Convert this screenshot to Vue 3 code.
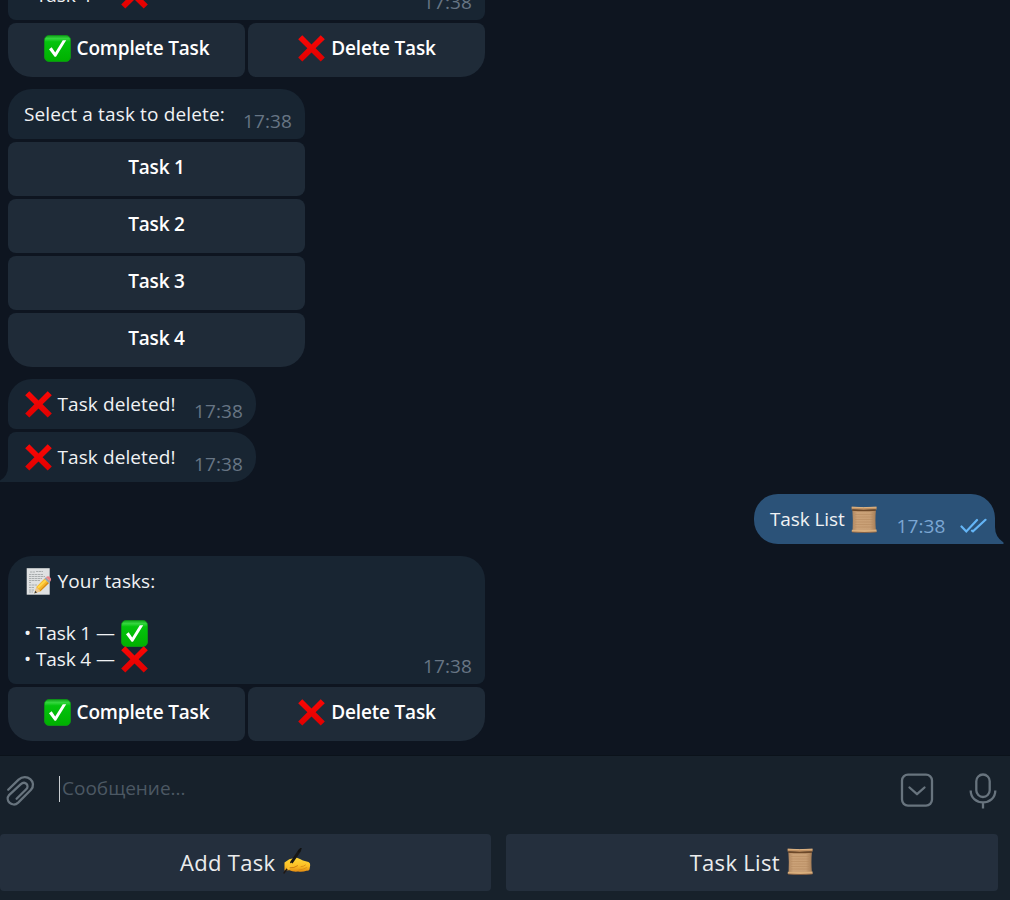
<script setup>
const deleteOptions = ['Task 1', 'Task 2', 'Task 3', 'Task 4']
const lists = {
  first: [{ name: 'Task 1', icon: 'check' }, { name: 'Task 4', icon: 'cross' }],
  last: [{ name: 'Task 1', icon: 'check' }, { name: 'Task 4', icon: 'cross' }],
}
const actions = [
  { label: 'Complete Task', icon: 'check' },
  { label: 'Delete Task', icon: 'cross' },
]
const time = '17:38'
</script>

<template>
  <div class="app">
    <svg class="defs" width="0" height="0" aria-hidden="true">
      <defs>
        <linearGradient id="gGreen" x1="0" y1="0" x2="0" y2="1">
          <stop offset="0" stop-color="#11a51b" />
          <stop offset=".12" stop-color="#35d63f" />
          <stop offset=".24" stop-color="#04c30d" />
          <stop offset="1" stop-color="#00b000" />
        </linearGradient>
        <linearGradient id="gRed" x1="0" y1="0" x2="0" y2="1">
          <stop offset="0" stop-color="#fb0705" />
          <stop offset="1" stop-color="#e00000" />
        </linearGradient>
        <linearGradient id="gPaper" x1="0" y1="0" x2="1" y2="0">
          <stop offset="0" stop-color="#b08760" />
          <stop offset=".2" stop-color="#cba278" />
          <stop offset=".75" stop-color="#c89f75" />
          <stop offset="1" stop-color="#a67d56" />
        </linearGradient>
        <linearGradient id="gHand" x1="0" y1="0" x2="0" y2="1">
          <stop offset="0" stop-color="#ffd83b" />
          <stop offset=".6" stop-color="#fdbf24" />
          <stop offset="1" stop-color="#e38b12" />
        </linearGradient>
        <symbol id="check" viewBox="0 0 27 27">
          <rect x=".5" y=".5" width="26" height="26" rx="4.5" fill="url(#gGreen)" stroke="#0c9c14" stroke-width=".8" />
          <path d="M5 14.2 7.7 12.2 11.2 17.5 18.8 5.3H22.2L12 21.8H10.6Z" fill="#fff" />
        </symbol>
        <symbol id="cross" viewBox="0 0 27 27">
          <path d="M4.3.2 13.5 9.4 22.7.2 26.8 4.2 17.6 13.3 26.8 22.6 22.7 26.6 13.5 17.5 4.3 26.6.2 22.6 9.4 13.3.2 4.2Z" fill="url(#gRed)" />
        </symbol>
        <symbol id="scroll" viewBox="0 0 27 27">
          <path d="M1.4 4.5H24.9Q24 13 24.9 24.5H1.6Q2.2 14 1.4 4.5Z" fill="url(#gPaper)" />
          <path d="M4 8.5H22M4 11H22M4 13.5H22M4 16H22M4 18.5H22M4 21H22" stroke="#b2875d" stroke-width=".5" />
          <path d="M.6.8Q12 1.6 25.6.8V3.6Q12 4.4.6 3.6Z" fill="#c09162" />
          <path d="M.8 1.2Q12 2 25.4 1.2" stroke="#e4bd8c" stroke-width=".8" fill="none" />
          <path d="M1.2 4Q12 5 24.8 4" stroke="#6d4828" stroke-width="1.4" fill="none" />
          <path d="M.8 23.8Q13 24.5 25.6 23.6V26Q13 27 .8 26Z" fill="#d9ae7c" />
          <path d="M1 26Q13 27 25.5 26" stroke="#80573a" stroke-width=".8" fill="none" />
        </symbol>
        <symbol id="memo" viewBox="0 0 27 27">
          <rect x="1.7" y=".2" width="23" height="26.5" fill="#dfe1e2" />
          <path d="M5 4H10M11 3.5H18M4 6.5H18M4 8.5H20M4 10.5H17M4 12.5H15M4 14.5H6M4 17H12M4 19.5H9M4 22H9M4 24H8" stroke="#9b9fa1" stroke-width=".8" stroke-dasharray="2.5 .5" />
          <path d="M9.5 25.3 11.5 18.8 19.4 10.7 23.8 15 15.4 23.2Z" fill="#f7b72c" />
          <path d="M12.3 19 20.2 11.4 21.6 12.7 13.5 20.5Z" fill="#ffd84a" />
          <path d="M14.5 22.7 22.7 14.3 23.8 15.3 15.4 23.2Z" fill="#d48a13" />
          <path d="M9.5 25.3 11.4 19 15.4 23.2Z" fill="#ecc78f" />
          <path d="M9.4 25.5 10.2 22.8 12 24.6Z" fill="#383838" />
          <path d="M19.4 10.7 20.9 9.2 25.3 13.5 23.8 15Z" fill="#9ba2a8" />
          <path d="M20.9 9.2Q23 7.5 25 9.2T25.3 13.5Z" fill="#e8848b" />
        </symbol>
        <symbol id="writing" viewBox="0 0 28 27">
          <path d="M1.5 22.5V14.5L6.3 11.2 13.3 9.4 17 11 20 12.5 25.5 14Q27.4 14.8 27.2 17L26.5 21.5Q25.8 23 23.5 22.7 20 24.3 15 23.6 10 24.2 6.5 22.3Z" fill="url(#gHand)" />
          <path d="M16 22Q20 21.8 23.5 19.7M18 18.7Q20.5 18.7 22.5 17" stroke="#d98a14" stroke-width=".8" fill="none" stroke-linecap="round" />
          <path d="M.6 25.5 4.6 20.2" stroke="#201915" stroke-width="1.4" />
          <path d="M8.4 14.6 16.8 2.4" stroke="#171717" stroke-width="2.8" stroke-linecap="round" />
          <path d="M15.8 3.2 17.8.6" stroke="#111" stroke-width="1.8" stroke-linecap="round" />
          <path d="M3.5 20.5 8 14.5 11 16.5Q9 19.5 5.5 21.5Z" fill="#fcc32b" />
          <path d="M7 19.8Q11 20.3 14.5 17.8" stroke="#c9780f" stroke-width=".9" fill="none" stroke-linecap="round" />
        </symbol>
      </defs>
    </svg>

    <main class="chat">
      <section v-for="(items, key) in { first: lists.first }" :key="key" class="message wide">
        <div class="bubble tall joined">
          <div class="text">
            <p><svg class="emoji"><use href="#memo" /></svg> Your tasks:</p>
            <p class="blank"></p>
            <p v-for="t in items" :key="t.name" class="item">• {{ t.name }} — <svg class="emoji"><use :href="'#' + t.icon" /></svg></p>
          </div>
          <time>{{ time }}</time>
        </div>
        <div class="keys row">
          <button v-for="a in actions" :key="a.label"><svg class="emoji"><use :href="'#' + a.icon" /></svg><span>{{ a.label }}</span></button>
        </div>
      </section>

      <section class="message select">
        <div class="bubble joined">
          <div class="text"><p class="prompt">Select a task to delete:</p></div>
          <time>{{ time }}</time>
        </div>
        <div class="keys column">
          <button v-for="o in deleteOptions" :key="o"><span>{{ o }}</span></button>
        </div>
      </section>

      <section class="group">
        <div v-for="n in 2" :key="n" class="bubble short" :class="n === 1 ? 'upper' : 'lower'">
          <div class="text"><p><svg class="emoji"><use href="#cross" /></svg> Task deleted!</p></div>
          <time>{{ time }}</time>
          <svg v-if="n === 2" class="tail-in" viewBox="0 0 9 22"><path d="M9 0V22H0V20.5Q8 16 8 6V0Z" /></svg>
        </div>
      </section>

      <section class="bubble out">
        <div class="text"><p class="item">Task List <svg class="emoji"><use href="#scroll" /></svg></p></div>
        <time>{{ time }}</time>
        <svg class="ticks" viewBox="0 0 28 16"><path d="M1.5 8.5 6.3 13.4 17 2M12 12.6 13 13.4 25.5 1.8" /></svg>
        <svg class="tail-out" viewBox="0 0 10 22"><path d="M0 0H1V5Q1 15 9.5 20.5V22H0Z" /></svg>
      </section>

      <section v-for="(items, key) in { last: lists.last }" :key="key" class="message wide">
        <div class="bubble tall joined">
          <div class="text">
            <p><svg class="emoji"><use href="#memo" /></svg> Your tasks:</p>
            <p class="blank"></p>
            <p v-for="t in items" :key="t.name" class="item">• {{ t.name }} — <svg class="emoji"><use :href="'#' + t.icon" /></svg></p>
          </div>
          <time>{{ time }}</time>
        </div>
        <div class="keys row">
          <button v-for="a in actions" :key="a.label"><svg class="emoji"><use :href="'#' + a.icon" /></svg><span>{{ a.label }}</span></button>
        </div>
      </section>
    </main>

    <footer class="panel">
      <div class="composer">
        <svg class="clip" viewBox="0 0 32 36">
          <path d="M3.2 14.8 13.6 4.6C21.5-2.5 32.8 7 25.8 15L13.2 27.6C7.5 33-.8 25.6 4.3 19.8L15.6 9.4C20.2 5.2 24.8 10.6 21.2 14.3L11.6 23.8" />
        </svg>
        <div class="field">Сообщение...</div>
        <svg class="box-icon" viewBox="0 0 34 34"><rect x="2" y="1.6" width="30" height="31" rx="6" /><path d="M9.5 14.5 17 21.2 24.5 14.5" /></svg>
        <svg class="mic" viewBox="0 0 28 36"><rect x="7.3" y="1.5" width="13.4" height="22.5" rx="6.7" /><path d="M1.7 17.5C1.7 33.3 26.3 33.3 26.3 17.5M14 29.5V35.5" /></svg>
      </div>
      <div class="reply">
        <button><span>Add Task</span><svg class="emoji hand"><use href="#writing" /></svg></button>
        <button><span>Task List</span><svg class="emoji"><use href="#scroll" /></svg></button>
      </div>
    </footer>
  </div>
</template>

<style>
body { background: #0e1621; }
</style>

<style scoped>
.app {
  width: 1010px;
  height: 900px;
  display: flex;
  flex-direction: column;
  overflow: hidden;
  background: #0e1520;
  color: #f0f2f4;
  font: 19px/26px "Open Sans", "Noto Sans", sans-serif;
}
.defs { position: absolute; }
.chat {
  height: 755px;
  box-sizing: border-box;
  padding: 0 15px 14px 8px;
  display: flex;
  flex-direction: column;
  justify-content: flex-end;
  align-items: flex-start;
  gap: 12px;
  overflow: hidden;
}
.message, .group { display: flex; flex-direction: column; gap: 3px; flex: none; }
.wide { width: 477px; }
.select { width: 297px; }
p { margin: 0; height: 26px; white-space: pre; letter-spacing: .09px; }
.prompt { letter-spacing: .14px; }
.item { letter-spacing: -.1px; }
.bubble {
  position: relative;
  flex: none;
  display: flex;
  justify-content: space-between;
  align-items: flex-end;
  box-sizing: border-box;
  height: 50px;
  padding: 0 13px 0 16px;
  background: #182532;
  border-radius: 24px;
}
.tall { height: 128px; }
.text { align-self: flex-start; padding-top: 12px; }
.joined { border-radius: 24px 24px 8px 8px; }
.upper { border-radius: 24px 24px 24px 8px; }
.lower { border-radius: 8px 24px 24px 0; }
.short { width: 248px; }
time { color: #677584; padding-bottom: 5.5px; letter-spacing: .12px; }
.emoji { width: 27px; height: 27px; flex: none; vertical-align: 3px; margin: -10px 1px -10px .5px; }
.item .emoji { margin-left: 1.5px; margin-right: 0; }
button {
  border: 0;
  margin: 0;
  padding: 0 0 4px;
  font: inherit;
  font-weight: 600;
  letter-spacing: -.18px;
  color: #fff;
  background: #1f2b38;
  border-radius: 8px;
  height: 54px;
  display: flex;
  align-items: center;
  justify-content: center;
  gap: 5px;
}
.keys { display: flex; gap: 3px; }
.keys.column { flex-direction: column; }
.row button { flex: 1; }
.row button:first-child { border-bottom-left-radius: 24px; }
.row button:last-child { border-bottom-right-radius: 24px; padding-left: 1px; }
.column button:last-child { border-radius: 8px 8px 24px 24px; }
.out {
  align-self: flex-end;
  width: 241px;
  justify-content: flex-start;
  background: #2b5278;
  border-radius: 24px 24px 0 24px;
}
.out time { color: #7ba6d3; margin-left: 18.5px; }
.ticks { width: 28px; height: 16px; margin: 0 0 10px 14px; fill: none; stroke: #64b5f6; stroke-width: 2.2; stroke-linecap: round; flex: none; }
.tail-in, .tail-out { position: absolute; bottom: 0; height: 22px; }
.tail-in { left: -8px; width: 9px; fill: #182532; }
.tail-out { right: -9px; width: 10px; fill: #2b5278; }
.chat { position: relative; }
.panel { flex: 1; background: #17212b; border-top: 1px solid #0b121a; box-sizing: border-box; }
.composer { height: 78px; display: flex; align-items: flex-start; }
.composer svg { flex: none; fill: none; stroke: #68747e; stroke-width: 2.3; stroke-linecap: round; stroke-linejoin: round; }
.clip { width: 32px; height: 36px; margin: 19px 0 0 5px; }
.field { flex: 1; margin: 20px 0 0 22px; border-left: 1px solid #c9ced2; padding-left: 2px; height: 26px; line-height: 24px; color: #4c5863; }
.composer .box-icon { width: 34px; height: 34px; margin-top: 17px; }
.composer .mic { width: 28px; height: 36px; margin: 17px 13px 0 35px; stroke-linecap: butt; }
.reply { display: grid; grid-template-columns: 491px 492px; gap: 15px; }
.reply button { height: 57px; padding: 0 0 1px; border-radius: 4px; background: #242f3d; color: #ebeced; font-size: 22px; font-weight: 500; letter-spacing: .3px; gap: 7px; }
.reply .emoji { margin-bottom: -8px; margin-right: 0; }
.reply .hand { width: 28px; }
</style>
